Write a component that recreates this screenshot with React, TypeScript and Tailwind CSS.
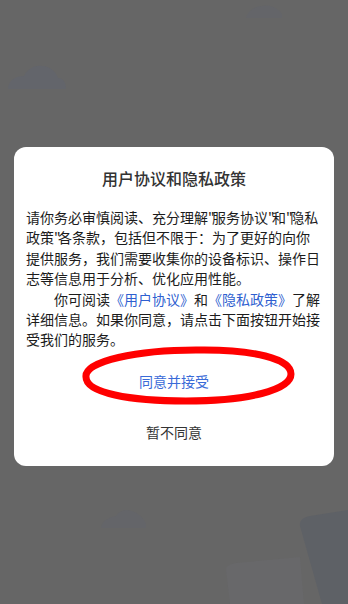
import React from "react";

const font = { fontFamily: '"Noto Sans CJK SC", "Noto Sans", sans-serif' };

function Backdrop() {
  return (
    <svg className="absolute inset-0 h-full w-full" viewBox="0 0 348 604" aria-hidden>
      <path d="M8 89 C8 80 16 76 24 76 C28 68 36 65 42 66 C50 66 56 72 58 78 C64 78 66 84 66 89 Z" fill="#63656b" />
      <path d="M246 18 C248 10 256 6 262 6 C270 4 278 8 282 14 L282 18 Z" fill="#646569" />
      <path d="M101 528 C102 520 110 517 116 516 C120 510 126 509 132 511 C138 513 144 518 146 524 L146 528 Z" fill="#646569" />
      <path d="M226 570 C226 566 230 564 236 563 L300 557 L304 604 L230 604 Z" fill="#68686a" />
      <path d="M300 526 C299 520 304 517 310 516 L348 510 L348 604 L322 604 Z" fill="#5e6166" />
    </svg>
  );
}

// narrow straight quote, as the source font draws it
const Q = () => <span className="tracking-[-2.6px]">"</span>;

export default function App() {
  return (
    <div className="relative h-[604px] w-[348px] overflow-hidden bg-[#666666]" style={font}>
      <Backdrop />

      <div className="relative pt-[147px] px-[14px]">
        <div className="relative flex w-[320px] flex-col rounded-[12px] bg-white px-3 pt-[19px] pb-[11px]">
          <h2 className="text-center text-[16px] leading-6 font-medium text-[#333333]">
            用户协议和隐私政策
          </h2>

          <div className="mt-[17px] w-[295px] text-[14px] leading-[20.4px] text-[#1c1c1c]">
            <p>
              请你务必审慎阅读、充分理解<Q />服务协议<Q />和<Q />隐私政策<Q />各条款，包括但不限于：为了更好的向你提供服务，我们需要收集你的设备标识、操作日志等信息用于分析、优化应用性能。
            </p>
            <p className="indent-[28px]">
              你可阅读<span className="text-[#2f5fd0]">《用户协议》</span>和<span className="text-[#2f5fd0]">《隐私政策》</span>了解详细信息。如果你同意，请点击下面按钮开始接受我们的服务。
            </p>
          </div>

          <button className="mt-[10px] h-[44px] text-center text-[14px] text-[#3a6bd8]">
            同意并接受
          </button>
          <button className="mt-[7px] h-[44px] text-center text-[14px] text-[#333333]">
            暂不同意
          </button>

          <svg
            className="pointer-events-none absolute left-[64px] top-[196px] h-[66px] w-[222px]"
            viewBox="0 0 222 66"
            aria-hidden
          >
            <path
              d="M8 34 C6 18 60 7 118 7 C176 6 213 16 213 31 C213 47 170 58 108 58 C52 58 8 50 8 34 Z"
              fill="none"
              stroke="#ff0000"
              strokeWidth="7"
            />
          </svg>
        </div>
      </div>
    </div>
  );
}
